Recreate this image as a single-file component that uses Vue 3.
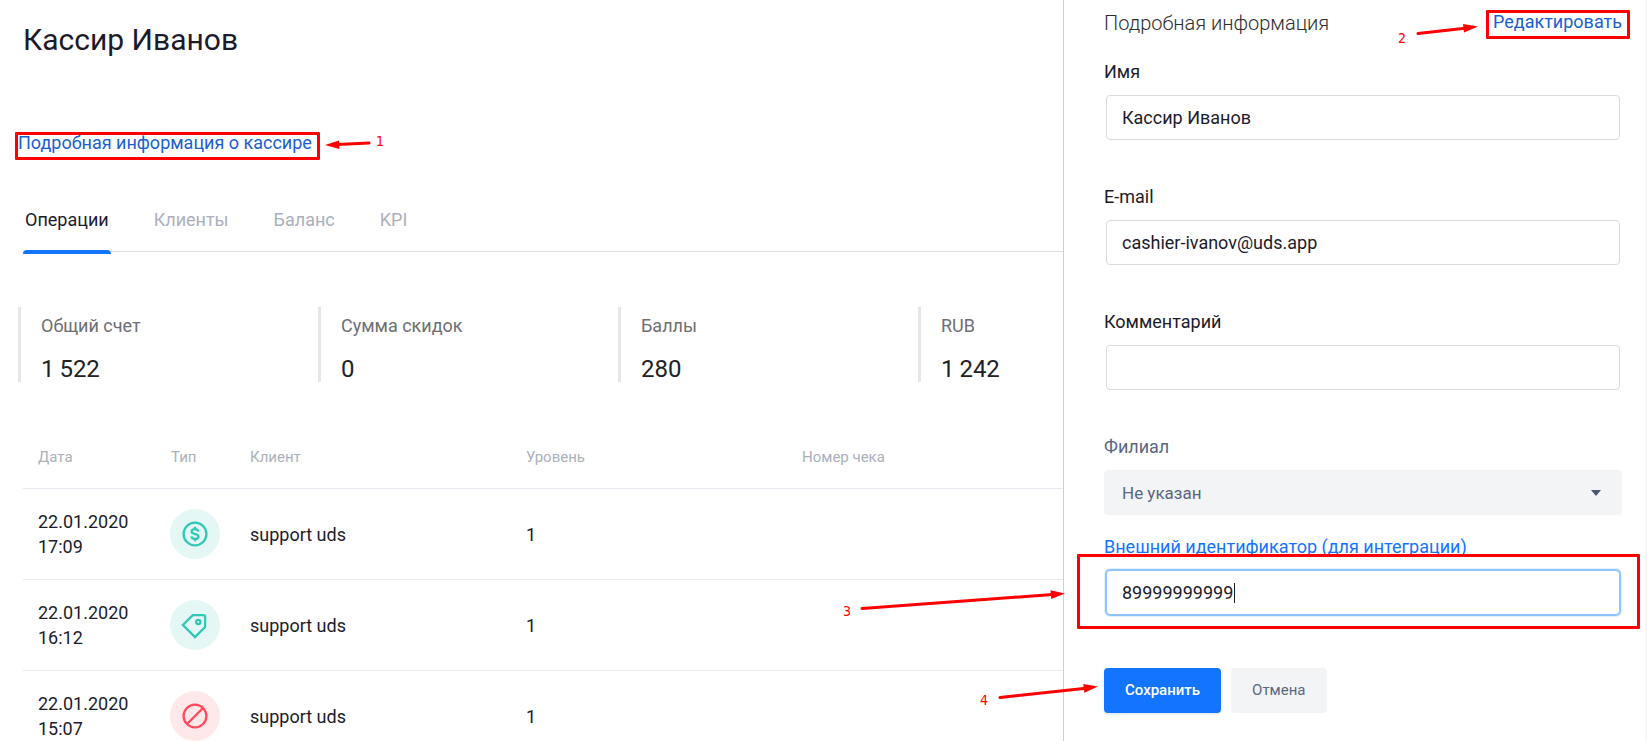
<script setup>
import { ref } from 'vue'

const tabs = ['Операции', 'Клиенты', 'Баланс', 'KPI']
const activeTab = ref('Операции')

const stats = [
  { label: 'Общий счет', value: '1\u2009522' },
  { label: 'Сумма скидок', value: '0' },
  { label: 'Баллы', value: '280' },
  { label: 'RUB', value: '1\u2009242' },
]

const operations = [
  { date: '22.01.2020', time: '17:09', type: 'money', client: 'support uds', level: 1 },
  { date: '22.01.2020', time: '16:12', type: 'tag', client: 'support uds', level: 1 },
  { date: '22.01.2020', time: '15:07', type: 'ban', client: 'support uds', level: 1 },
]

const form = ref({
  name: 'Кассир Иванов',
  email: 'cashier-ivanov@uds.app',
  comment: '',
  branch: 'Не указан',
  externalId: '89999999999',
})
</script>

<template>
  <div class="page">
    <main class="main">
      <h1 class="title">Кассир Иванов</h1>

      <div class="details">
        <a class="link" href="#details">Подробная информация о кассире</a>
        <span class="mark mark-details"></span>
        <svg class="note note-details" width="64" height="20" viewBox="0 0 64 20">
          <line x1="14" y1="10.6" x2="46" y2="9" />
          <polygon points="2,11 16,6.5 16.4,15" />
          <text x="53" y="12">1</text>
        </svg>
      </div>

      <nav class="tabs">
        <button
          v-for="tab in tabs"
          :key="tab"
          type="button"
          class="tab"
          :class="{ active: tab === activeTab }"
          @click="activeTab = tab"
        >{{ tab }}</button>
      </nav>

      <section class="stats">
        <div v-for="s in stats" :key="s.label" class="stat">
          <div class="stat-label">{{ s.label }}</div>
          <div class="stat-value">{{ s.value }}</div>
        </div>
      </section>

      <table class="table">
        <colgroup>
          <col class="col-date" />
          <col class="col-type" />
          <col class="col-wide" />
          <col class="col-wide" />
          <col />
        </colgroup>
        <thead>
          <tr>
            <th>Дата</th>
            <th>Тип</th>
            <th>Клиент</th>
            <th>Уровень</th>
            <th>Номер чека</th>
          </tr>
        </thead>
        <tbody>
          <tr v-for="op in operations" :key="op.time">
            <td>{{ op.date }}<br />{{ op.time }}</td>
            <td>
              <svg class="badge" :class="op.type" width="50" height="50" viewBox="0 0 50 50">
                <circle class="disc" cx="25" cy="25" r="25" />
                <g v-if="op.type === 'money'">
                  <circle cx="25" cy="25" r="11.4" />
                  <path d="M28.4 22.6c-.3-1.6-1.6-2.5-3.4-2.5-2 0-3.4 1-3.4 2.5 0 3.4 6.9 1.5 6.9 4.9 0 1.5-1.4 2.5-3.5 2.5-1.9 0-3.3-.9-3.6-2.6M25 17.8v2.2M25 30v2.2" />
                </g>
                <g v-else-if="op.type === 'tag'">
                  <path d="M12.9 25 22.8 15.2H33.6Q35.1 15.2 35.1 16.7V27L25 37.1Z" />
                  <circle cx="28.3" cy="22" r="2.1" />
                </g>
                <g v-else>
                  <circle cx="25" cy="25" r="11.4" />
                  <path d="M17 33 33 17" />
                </g>
              </svg>
            </td>
            <td>{{ op.client }}</td>
            <td>{{ op.level }}</td>
            <td></td>
          </tr>
        </tbody>
      </table>
    </main>

    <aside class="panel">
      <header class="panel-head">
        <h2 class="panel-title">Подробная информация</h2>
        <div class="edit">
          <a class="link" href="#edit">Редактировать</a>
          <span class="mark mark-edit"></span>
          <svg class="note note-edit" width="84" height="26" viewBox="0 0 84 26">
            <line x1="22" y1="13.5" x2="69" y2="8.2" />
            <polygon points="82,6.5 67,4 68,12.5" />
            <text x="2" y="23">2</text>
          </svg>
        </div>
      </header>

      <form @submit.prevent>
        <div class="field">
          <label for="name">Имя</label>
          <input id="name" v-model="form.name" type="text" />
        </div>
        <div class="field">
          <label for="email">E-mail</label>
          <input id="email" v-model="form.email" type="text" />
        </div>
        <div class="field">
          <label for="comment">Комментарий</label>
          <input id="comment" v-model="form.comment" type="text" />
        </div>
        <div class="field field-branch">
          <label for="branch">Филиал</label>
          <div class="control">
            <select id="branch" v-model="form.branch">
              <option>Не указан</option>
            </select>
            <svg class="chevron" width="10" height="6" viewBox="0 0 10 6"><path d="M0 0H10L5 6Z" /></svg>
          </div>
        </div>
        <div class="field field-external">
          <label for="external">Внешний идентификатор (для интеграции)</label>
          <div class="control">
            <input id="external" v-model="form.externalId" type="text" />
            <span class="caret"></span>
            <span class="mark mark-external"></span>
            <svg class="note note-external" width="224" height="32" viewBox="0 0 224 32">
              <line x1="20" y1="20.5" x2="211" y2="6.5" />
              <polygon points="223,5.5 208.5,2.3 209.2,11" />
              <text x="1" y="28">3</text>
            </svg>
          </div>
        </div>
        <div class="actions">
          <button type="submit" class="btn primary">Сохранить</button>
          <button type="button" class="btn">Отмена</button>
          <svg class="note note-save" width="120" height="26" viewBox="0 0 120 26">
            <line x1="21" y1="15.5" x2="107" y2="6.2" />
            <polygon points="119,4.5 104.3,2 105.3,10.7" />
            <text x="1" y="23">4</text>
          </svg>
        </div>
      </form>
    </aside>
  </div>
</template>

<style>
body {
  margin: 0;
  background: #fff;
}
</style>

<style scoped>
.page {
  display: flex;
  height: 100vh;
  overflow: hidden;
  font-family: Roboto, "Noto Sans", sans-serif;
  font-size: 18px;
  line-height: 24px;
  color: #1c1b2b;
}

.main {
  flex: 1;
  min-width: 0;
  overflow: hidden;
  padding: 20px 0 0 18px;
}

.title {
  margin: 0 0 71px 5px;
  font-size: 30px;
  line-height: 40px;
  font-weight: 400;
}

.link {
  color: #1a5fd0;
  text-decoration: none;
}

.details,
.edit,
.control,
.actions {
  position: relative;
}

.details {
  width: fit-content;
}

.mark {
  position: absolute;
  border: 3px solid #f00;
  border-radius: 1px;
  pointer-events: none;
}

.mark-details {
  inset: 1px -8px -5px -3px;
}

.mark-edit {
  inset: 0 -8px -5px -7px;
}

.mark-external {
  inset: -16px -18px -14px -27px;
}

.note {
  position: absolute;
  overflow: visible;
  pointer-events: none;
}

.note line {
  stroke: #f00;
  stroke-width: 3;
  stroke-linecap: round;
}

.note polygon {
  fill: #f00;
}

.note text {
  fill: #f00;
  font-family: "DejaVu Sans Condensed", "DejaVu Sans", sans-serif;
  font-size: 14px;
}

.note-details {
  left: calc(100% + 11px);
  top: 3px;
}

.note-edit {
  right: calc(100% + 13px);
  top: 10px;
}

.note-external {
  right: calc(100% + 38px);
  top: 18px;
}

.note-save {
  right: calc(100% + 5px);
  top: 14px;
}

.tabs {
  display: flex;
  gap: 41px;
  margin: 53px 0 0 5px;
  border-bottom: 1px solid #dcdde0;
}

.tab {
  position: relative;
  padding: 0 2px 19px;
  border: 0;
  background: none;
  font: inherit;
  color: #abb0bd;
  cursor: pointer;
}

.tab.active {
  color: #1c1b2b;
}

.tab.active::after {
  content: "";
  position: absolute;
  left: 0;
  right: 0;
  bottom: -3px;
  height: 4px;
  border-radius: 4px 4px 0 0;
  background: #1274ff;
}

.stats {
  display: flex;
  margin-top: 55px;
}

.stat {
  flex: 0 0 300px;
  box-sizing: border-box;
  padding: 7px 0 0 20px;
  border-left: 3px solid #e4e6e8;
}

.stat-label {
  color: #6d6f73;
}

.stat-value {
  margin-top: 18px;
  font-size: 24px;
  line-height: 26px;
  color: #212226;
}

.table {
  width: calc(100% - 5px);
  margin: 65px 0 0 5px;
  border-collapse: separate;
  border-spacing: 0;
  table-layout: fixed;
}

.col-date {
  width: 148px;
}

.col-type {
  width: 79px;
}

.col-wide {
  width: 276px;
}

.table th {
  padding: 0 0 21px;
  border-bottom: 1px solid #e4eaf0;
  font-size: 15px;
  line-height: 20px;
  font-weight: 400;
  text-align: left;
  color: #abb0bd;
}

.table td {
  padding: 20px 0;
  border-bottom: 1px solid #e8ebee;
  line-height: 25px;
  vertical-align: middle;
}

.table th:first-child,
.table td:first-child {
  padding-left: 15px;
}

.badge {
  display: block;
  margin-left: -1px;
  fill: none;
  stroke: #30c7b7;
  stroke-width: 2.3;
}

.badge .disc {
  fill: #e4f7f5;
  stroke: none;
}

.badge.ban {
  stroke: #ff4b5c;
}

.badge.ban .disc {
  fill: #ffe8ea;
}

.panel {
  position: relative;
  flex: 0 0 584px;
  box-sizing: border-box;
  padding: 10px 24px 0 40px;
  border-left: 1px solid #cfcfd1;
  border-right: 1px solid #ededef;
}

.panel-head {
  display: flex;
  justify-content: space-between;
  align-items: flex-start;
  margin-bottom: 24px;
}

.panel-title {
  margin: 0;
  font-size: 20px;
  line-height: 26px;
  font-weight: 300;
  color: #2c2c30;
}

.field {
  display: flex;
  flex-direction: column;
  gap: 11px;
  margin-bottom: 45px;
}

.field input,
.field select {
  box-sizing: border-box;
  height: 45px;
  font: inherit;
  color: inherit;
  outline: 0;
}

.field input {
  width: calc(100% - 4px);
  margin: 0 2px;
  padding: 0 15px;
  border: 1px solid #d9dbde;
  border-radius: 4px;
  background: #fff;
}

.control {
  display: flex;
}

.field select {
  width: 100%;
  padding: 0 18px;
  border: 0;
  border-radius: 4px;
  background: #f3f4f6;
  font-size: 17px;
  appearance: none;
}

.field-branch {
  margin-bottom: 20px;
  color: #5a6780;
}

.chevron {
  position: absolute;
  right: 21px;
  top: 20px;
  fill: #4a5872;
  pointer-events: none;
}

.field-external {
  margin-bottom: 53px;
}

.field-external label {
  color: #1274ff;
}

.field-external input {
  border-color: #8ec5ff;
  box-shadow: 0 0 0 1px #8ec5ff, 0 0 0 2px #e3f1ff;
  caret-color: transparent;
}

.caret {
  position: absolute;
  left: 130px;
  top: 13px;
  width: 1px;
  height: 20px;
  background: #1c1b2b;
}

.actions {
  display: flex;
  gap: 10px;
}

.btn {
  height: 45px;
  padding: 0 21px 2px;
  border: 0;
  border-radius: 4px;
  background: #f3f4f6;
  font: inherit;
  font-size: 15px;
  color: #5a6780;
  cursor: pointer;
}

.btn.primary {
  background: #1274ff;
  box-shadow: 0 2px 2px #e9ebee;
  font-weight: 500;
  color: #fff;
}
</style>
